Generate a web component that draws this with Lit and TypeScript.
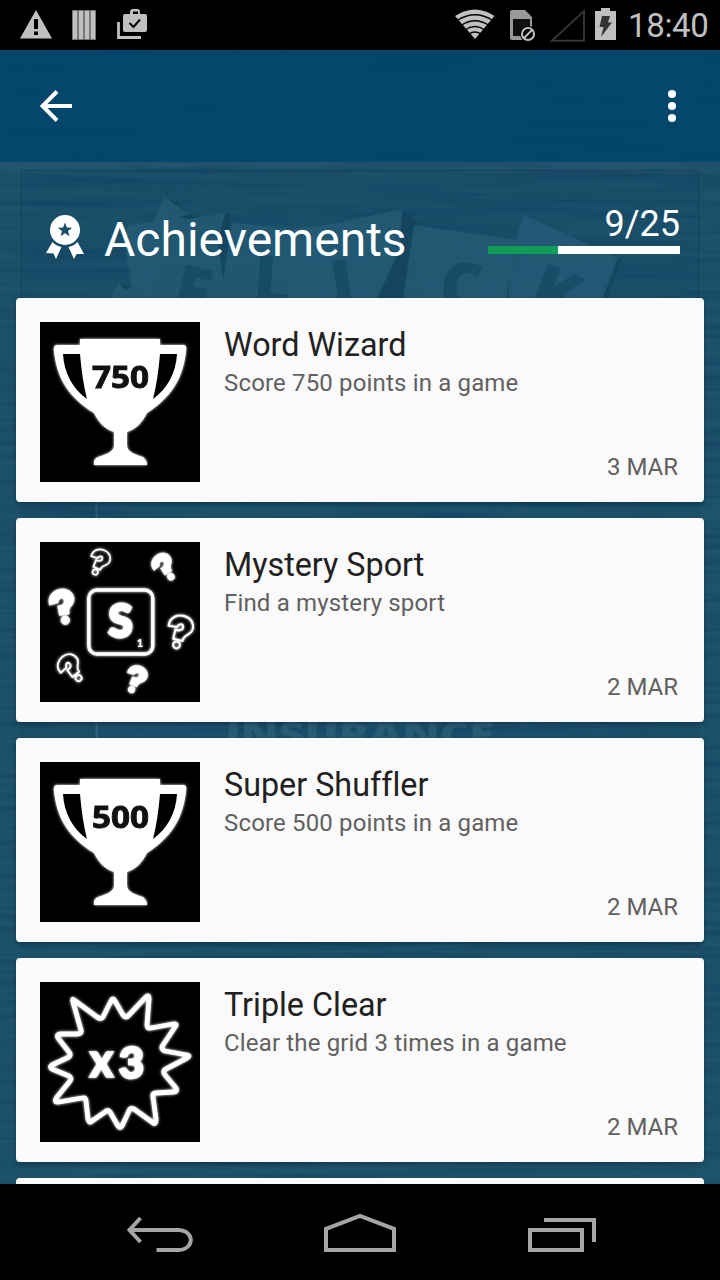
import { LitElement, html, svg, css } from "lit";
import { customElement, property } from "lit/decorators.js";

type Badge = "750" | "500" | "mystery" | "triple";

interface Achievement {
  title: string;
  detail: string;
  date: string;
  badge: Badge;
}

const ACHIEVEMENTS: Achievement[] = [
  { title: "Word Wizard", detail: "Score 750 points in a game", date: "3 MAR", badge: "750" },
  { title: "Mystery Sport", detail: "Find a mystery sport", date: "2 MAR", badge: "mystery" },
  { title: "Super Shuffler", detail: "Score 500 points in a game", date: "2 MAR", badge: "500" },
  { title: "Triple Clear", detail: "Clear the grid 3 times in a game", date: "2 MAR", badge: "triple" },
];

const trophy = (label: string) => svg`
  <path fill="#fff" stroke-linejoin="round" d="M40 17H120V23H144Q147 23 146 29C143 58 130 76 107 91C102 101 96 107 87 110V123C87 130 94 132 103 135Q107 138 107 143H54Q53 137 58 135C67 132 74 130 74 123V110C65 107 59 101 54 91C30 76 17 58 14 29Q13 23 17 23H40Z"/>
  <path fill="#000" d="M23 32H40Q42 57 47 77C33 67 24 51 23 32ZM137 32H120Q118 57 113 77C127 67 136 51 137 32Z"/>
  <text x="80.500" y="65.500" fill="#111" stroke="#111" stroke-width="0.900" font-family="Open Sans, sans-serif" font-weight="700" font-size="31" text-anchor="middle" textLength="57" lengthAdjust="spacingAndGlyphs">${label}</text>`;

const MARK = "M-12 -7C-13 -17 -5 -21 1 -21C13 -21 17 -9 10 -3C8 -1 6 0 6 5H-4V-5C1 -4 4 -7 3 -10C2 -13 -2 -12 -3 -8Z";

const mark = (x: number, y: number, rot: number, scale: number, solid: boolean) => svg`
  <g transform="translate(${x} ${y}) rotate(${rot}) scale(${scale})" fill=${solid ? "#fff" : "none"} stroke="#fff" stroke-width=${solid ? 0.6 : 2.2} stroke-linejoin="round">
    <path d=${MARK}/>
    <circle cx="1" cy="10.500" r=${solid ? 4.3 : 3.6}/>
  </g>`;

const mystery = svg`
  <rect x="48.800" y="48" width="64" height="64" rx="8" fill="none" stroke="#fff" stroke-width="3.400"/>
  <text x="80.500" y="94.500" fill="#fff" stroke="#fff" stroke-width="3" font-family="Lato, sans-serif" font-weight="900" font-size="46" text-anchor="middle" textLength="24" lengthAdjust="spacingAndGlyphs">S</text>
  <text x="100" y="105" fill="#fff" font-family="Lato, sans-serif" font-weight="900" font-size="11" text-anchor="middle">1</text>
  ${mark(57.5, 22.5, 22, 0.75, false)}
  ${mark(125.5, 28, -33, 0.83, true)}
  ${mark(22.500, 68, -10, 1, true)}
  ${mark(138, 93, 14, 0.95, false)}
  ${mark(32.5, 129.5, -37, 0.85, false)}
  ${mark(94, 139.5, 22, 0.8, true)}`;

const triple = svg`
  <path fill="none" stroke="#fff" stroke-width="4.800" stroke-linejoin="round" d="M34 18L57 35Q61 38 63 35L71 19Q73 15 75 19L83 33Q86 37 89 33L104 17Q109 11 109 17L107 43Q107 47 111 46L133 42Q138 41 135 45L123 63Q120 67 125 69L147 73Q151 74 147 76L126 87Q122 89 125 93L136 106Q138 110 133 110L116 111Q112 111 113 115L116 137Q116 144 112 140L94 127Q90 125 89 129L82 144Q80 147 78 144L70 130Q68 127 65 130L52 139Q49 142 48 137L46 119Q46 115 42 116L19 120Q13 121 17 115L30 99Q32 96 29 94L12 87Q9 85 12 83L27 76Q32 74 29 70L18 56Q16 52 21 52L37 52Q42 52 41 48L33 20Q32 16 34 18Z"/>
  <text x="61.500" y="95" fill="#fff" stroke="#fff" stroke-width="1.500" font-family="Lato, sans-serif" font-weight="900" font-size="48" text-anchor="middle" textLength="24" lengthAdjust="spacingAndGlyphs">x</text>
  <text x="91.500" y="96" fill="#fff" stroke="#fff" stroke-width="2.400" font-family="Lato, sans-serif" font-weight="900" font-size="42" text-anchor="middle" textLength="25" lengthAdjust="spacingAndGlyphs">3</text>`;

@customElement("achievement-card")
export class AchievementCard extends LitElement {
  static styles = css`
    :host {
      display: flex;
      flex: none;
      box-sizing: border-box;
      height: 204px;
      padding: 24px;
      gap: 24px;
      background: #fafafa;
      border-radius: 4px;
      box-shadow: 0 2px 4px rgba(0, 20, 40, 0.38);
      font-variant-ligatures: none;
    }
    .badge { display: block; flex: none; width: 160px; height: 160px; background: #000; }
    .body { display: flex; flex-direction: column; flex: 1; }
    .title { font-size: 32.300px; line-height: 40px; margin-top: 3px; letter-spacing: 0; color: #212121; }
    .detail { font-size: 24px; line-height: 30px; margin-top: 3px; letter-spacing: 0.160px; color: #616161; }
    .date { font-size: 24px; line-height: 30px; margin: auto 2px -4px 0; color: #616161; align-self: flex-end; }
    .title, .detail, .date { white-space: nowrap; }
  `;

  @property({ attribute: false }) item!: Achievement;

  render() {
    const { badge, title, detail, date } = this.item;
    const art = badge === "mystery" ? mystery : badge === "triple" ? triple : trophy(badge);
    return html`
      <svg class="badge" viewBox="0 0 160 160">
        <defs><filter id="glow" x="-10%" y="-10%" width="120%" height="120%" color-interpolation-filters="sRGB">
          <feGaussianBlur stdDeviation="1.500" result="b"/>
          <feGaussianBlur in="SourceGraphic" stdDeviation="0.500" result="s"/>
          <feMerge><feMergeNode in="b"/><feMergeNode in="s"/></feMerge>
        </filter></defs>
        <g filter="url(#glow)">${art}</g>
      </svg>
      <div class="body">
        <div class="title">${title}</div>
        <div class="detail">${detail}</div>
        <div class="date">${date}</div>
      </div>`;
  }
}

@customElement("app-root")
export class AppRoot extends LitElement {
  static styles = css`
    :host {
      display: flex;
      flex-direction: column;
      width: 720px;
      height: 1280px;
      overflow: hidden;
      background: #000;
      font-family: Roboto, sans-serif;
      position: relative;
    }
    svg { display: block; flex: none; }
    .status { height: 50px; flex: none; display: flex; justify-content: space-between; color: #c0c0c0; }
    .right { display: flex; }
    .clock { width: 92px; font-size: 33px; line-height: 52px; letter-spacing: -0.350px; white-space: nowrap; }
    .screen { position: relative; flex: 1; min-height: 0; display: flex; flex-direction: column; overflow: hidden; background: #1c5069; }
    .wood { position: absolute; top: 0; left: 0; }
    .bar { position: relative; flex: none; height: 112px; box-sizing: border-box; padding: 0 40px; display: flex; align-items: center; justify-content: space-between; background: rgba(2, 70, 108, 0.9); }
    .heading { position: relative; flex: none; height: 136px; box-sizing: border-box; padding: 0 40px 0 44px; display: flex; color: #fff; }
    .medal { margin-top: 50px; }
    .name { margin: 48px 0 0 16px; font-size: 48px; line-height: 60px; flex: 1; white-space: nowrap; }
    .progress { width: 192px; display: flex; flex-direction: column; }
    .count { margin-top: 39px; height: 45px; font-size: 36px; line-height: 46px; text-align: right; }
    .track { height: 8px; background: #fff; }
    .fill { height: 8px; background: #0f9d58; }
    .list { position: relative; display: flex; flex-direction: column; gap: 16px; padding: 0 16px; }
    .peek { height: 40px; flex: none; border-radius: 4px; background: #fafafa; }
    .nav { height: 96px; flex: none; background: #000; }
  `;

  private done = 9;
  private total = 25;

  private wood() {
    return html`<svg class="wood" width="720" height="1134" viewBox="0 50 720 1134">
      <defs>
        <filter id="dark" x="0" y="0" width="100%" height="100%" color-interpolation-filters="sRGB">
          <feTurbulence type="fractalNoise" baseFrequency="0.006 0.15" numOctaves="4" seed="8"/>
          <feColorMatrix values="0 0 0 0 0.050  0 0 0 0 0.230  0 0 0 0 0.360  0 2 0 0 -0.750"/>
        </filter>
        <filter id="light" x="0" y="0" width="100%" height="100%" color-interpolation-filters="sRGB">
          <feTurbulence type="fractalNoise" baseFrequency="0.004 0.09" numOctaves="3" seed="21"/>
          <feColorMatrix values="0 0 0 0 0.160  0 0 0 0 0.350  0 0 0 0 0.450  0 2 0 0 -0.850"/>
        </filter>
      </defs>
      <rect y="50" width="720" height="1134" fill="#1e536c"/>
      <rect y="162" width="720" height="8" fill="#24556e"/>
      <rect x="21" y="170" width="678" height="780" fill="#1a4f69"/>
      <g fill="none" stroke="#2a5d76" stroke-width="2" opacity="0.5">
        <circle cx="56" cy="50" r="34"/><circle cx="360" cy="42" r="25"/><circle cx="664" cy="50" r="34"/>
      </g>
      <rect x="95" y="480" width="530" height="290" fill="#1d5370" opacity="0.5"/>
      <path d="M96.500 480V770" stroke="#356980" stroke-width="2"/>
      <rect y="50" width="720" height="1134" filter="url(#dark)" opacity="0.480"/>
      <rect y="50" width="720" height="1134" filter="url(#light)" opacity="0.300"/>
      <path d="M21 300V170H699V300" fill="none" stroke="#10405a" stroke-width="2" opacity="0.350"/>
      <g fill="#103f59" opacity="0.500">
        <path d="M170 198L196 218L230 213L232 300H130L110 296L122 284L131 288L146 281L150 300Z"/>
        <path d="M234 223L292 233L286 300H230ZM404 210L418 225L422 300H376ZM514 240L524 246L512 300H504ZM614 257L622 259L606 300H598Z"/>
      </g>
      <g fill="#245b75" opacity="0.850">
        <path d="M164 197L190 214L180 217L187 219L225 213L218 242L226 300H134L123 235L129 225L153 222ZM119 283L125 290L144 283L146 300H109Z"/>
        <path d="M232 223L290 229L322 226L322 300H220ZM322 226L402 209L400 250L376 300H322Z"/>
        <path d="M414 225L517 240L506 300H403ZM524 215L618 258L602 300H508L512 250Z"/>
      </g>
      <g font-family="Open Sans, sans-serif" font-weight="800" font-size="66" fill="#174b65" opacity="0.850">
        <text transform="translate(170 309) rotate(14)">F</text>
        <text transform="translate(252 302) rotate(4)">L</text>
        <text transform="translate(334 308) rotate(-8)">I</text>
        <text transform="translate(438 308) rotate(5)">C</text>
        <text transform="translate(526 306) rotate(22)">K</text>
      </g>
      <text x="225" y="746" font-family="Open Sans, sans-serif" font-weight="800" font-size="34" fill="#2a5f78" opacity="0.850" textLength="269" lengthAdjust="spacingAndGlyphs">INSURANCE</text>
    </svg>`;
  }

  render() {
    return html`
      <div class="status">
        <svg width="160" height="50" viewBox="0 0 160 50" fill="#c0c0c0">
          <path fill-rule="evenodd" d="M36 10L52 38.500H20ZM34 19V29H38V19ZM34 31.500V35H38V31.500Z"/>
          <g stroke="#777" stroke-width="1"><path d="M72.500 10.500H77.500V39.500H72.500ZM78.500 10.500H83.500V39.500H78.500ZM84.500 10.500H89.500V39.500H84.500ZM90.500 10.500H95.500V39.500H90.500Z"/></g>
          <path fill-rule="evenodd" d="M125 14H130V12Q130 9 133 9H137Q140 9 140 12V14H145Q147 14 147 16V30Q147 32 145 32H125Q123 32 123 30V16Q123 14 125 14ZM133 14H138V11.500H133Z"/>
          <path d="M129.500 23L133.500 27L140 19.500" fill="none" stroke="#000" stroke-width="2"/>
          <path d="M118.500 22V37.500H141" fill="none" stroke="#c0c0c0" stroke-width="2.800"/>
        </svg>
        <div class="right">
          <svg width="180" height="50" viewBox="448 0 180 50">
            <path d="M475 39L455 16Q475 3 494.500 16Z" fill="#c0c0c0"/>
            <path d="M457 20.500Q475 9 493 20.500M461 25.500Q475 16 489 25.500M465 30Q475 23 485 30M469 34Q475 30 481 34" fill="none" stroke="#000" stroke-width="1.300"/>
            <path d="M510 12Q510 10 512 10H525L532 17V38Q532 40 530 40H512Q510 40 510 38Z" fill="#999"/>
            <path d="M513 19H530V36H513Z" fill="#111"/>
            <circle cx="528" cy="34" r="8" fill="#000"/>
            <circle cx="528" cy="34" r="6" fill="none" stroke="#c0c0c0" stroke-width="2"/><path d="M524 38L532 30" stroke="#c0c0c0" stroke-width="2"/>
            <path d="M552 40.800L584 11V40.800Z" fill="none" stroke="#333" stroke-width="2"/>
            <path d="M595 11H601V8H610V11H616V40H595Z" fill="#c0c0c0"/>
            <path d="M602 16H610L608 22.500H612L601 37L603.500 27H599.500Z" fill="#333"/>
          </svg>
          <div class="clock">18:40</div>
        </div>
      </div>
      <div class="screen">
        ${this.wood()}
        <div class="bar">
          <svg width="32" height="32" viewBox="0 0 32 32"><path d="M17 1.500L2.500 16L17 30.500M3 16H32" fill="none" stroke="#fff" stroke-width="4"/></svg>
          <svg width="16" height="32" viewBox="0 0 16 32" fill="#fff"><circle cx="8" cy="4" r="4"/><circle cx="8" cy="16" r="4"/><circle cx="8" cy="28" r="4"/></svg>
        </div>
        <div class="heading">
          <svg class="medal" width="44" height="50" viewBox="44 212 44 50" fill="#fff">
            <path fill-rule="evenodd" d="M65 215A15 15 0 1 0 65 245A15 15 0 1 0 65 215ZM65 222.500L66.900 227.500L72.200 227.700L68 231L69.500 236.200L65 233.200L60.500 236.200L62 231L57.800 227.700L63.100 227.500Z"/>
            <path d="M52.500 242Q56 246 61.500 247L56 259L53.500 253.500L46 253ZM77.500 242Q74 246 68.500 247L74 259L76.500 254L84 254Z"/>
          </svg>
          <div class="name">Achievements</div>
          <div class="progress">
            <div class="count">${this.done}/${this.total}</div>
            <div class="track"><div class="fill" style="width:${Math.ceil((this.done / this.total) * 192)}px"></div></div>
          </div>
        </div>
        <div class="list">
          ${ACHIEVEMENTS.map((a) => html`<achievement-card .item=${a}></achievement-card>`)}
          <div class="peek"></div>
        </div>
      </div>
      <svg class="nav" width="720" height="96" viewBox="0 1184 720 96" fill="none" stroke="#a5a5a5" stroke-width="4">
        <path d="M140.500 1218L129.500 1230L140.500 1242M129 1230H178C195 1230 195 1250 178 1250H156.500"/>
        <path d="M326 1250V1229L360 1216L394 1229V1250Z"/>
        <path d="M530 1230H582V1250H530ZM544 1220H594V1242"/>
      </svg>`;
  }
}
